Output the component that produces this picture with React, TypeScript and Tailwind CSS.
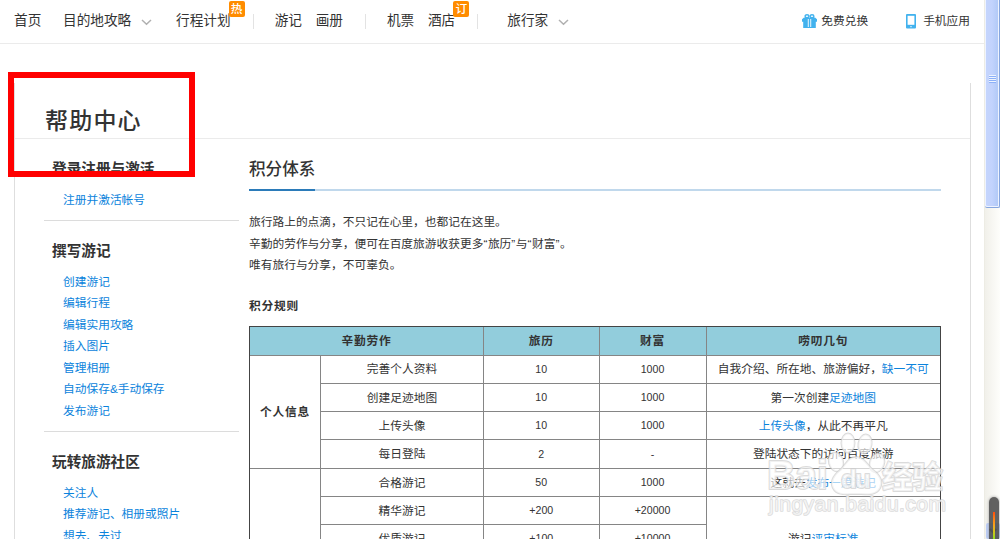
import type { ReactNode } from 'react';

const groups = [
  { title: '登录注册与激活', items: ['注册并激活帐号'] },
  {
    title: '撰写游记',
    items: ['创建游记', '编辑行程', '编辑实用攻略', '插入图片', '管理相册', '自动保存&手动保存', '发布游记'],
  },
  { title: '玩转旅游社区', items: ['关注人', '推荐游记、相册或照片', '想去、去过'] },
];

function Chevron() {
  return (
    <svg className="ml-[10px] mt-[2px] shrink-0" width="11" height="7" viewBox="0 0 11 7" fill="none" stroke="#b0b0b0" strokeWidth="1.5">
      <path d="M1 1l4.5 4.3L10 1" />
    </svg>
  );
}

function Badge({ children }: { children: ReactNode }) {
  return (
    <span className="absolute -right-[14px] -top-[10px] flex h-4 w-4 items-center justify-center rounded-[2px] bg-[#ff8c00] text-[11.7px] font-medium leading-none text-white">
      {children}
    </span>
  );
}

function GiftIcon() {
  return (
    <svg width="15" height="14" viewBox="0 0 15 14">
      <g fill="none" stroke="#42b2ee" strokeWidth="1.4">
        <ellipse cx="5" cy="2.2" rx="1.9" ry="1.5" />
        <ellipse cx="10" cy="2.2" rx="1.9" ry="1.5" />
      </g>
      <path fill="#42b2ee" d="M2 3.6h11l2 1.6v2.6h-1.2V14H1.2V7.8H0V5.2z" />
      <path fill="#fff" d="M5.8 5h.9v8h-.9zM8.3 5h.9v8h-.9z" />
    </svg>
  );
}

function PhoneIcon() {
  return (
    <svg width="10" height="15" viewBox="0 0 10 15">
      <rect width="10" height="14.5" rx="1" fill="#42b2ee" />
      <rect x="1.6" y="1.8" width="6.8" height="9" fill="#fff" />
      <rect x="4.3" y="12.2" width="1.4" height="1" fill="#fff" />
    </svg>
  );
}

function Q({ children }: { children: ReactNode }) {
  return <span className="tracking-[0.6px]">{children}</span>;
}

function Link({ children }: { children: ReactNode }) {
  return <a className="text-[#0b83dc]">{children}</a>;
}

function Cell({ children, className = '' }: { children?: ReactNode; className?: string }) {
  return (
    <div className={`flex items-center justify-center whitespace-nowrap border-b border-r border-[#858585] ${className}`}>
      <span>{children}</span>
    </div>
  );
}

function Head({ children, className = '' }: { children: ReactNode; className?: string }) {
  return <Cell className={`bg-[#92cddc] font-bold tracking-[0.8px] ${className}`}>{children}</Cell>;
}

function Num({ children }: { children: ReactNode }) {
  return <Cell className="pt-px text-[10.6px]">{children}</Cell>;
}

function Row({ name, exp, coin }: { name: string; exp: string; coin: string }) {
  return (
    <>
      <Cell>{name}</Cell>
      <Num>{exp}</Num>
      <Num>{coin}</Num>
    </>
  );
}

function Nav() {
  return (
    <nav className="flex h-[44px] items-center border-b border-[#ebebeb] pb-px pl-[14px] text-[13.67px] leading-5">
      <span className="w-[49px]">首页</span>
      <span className="flex w-[113px] items-center">目的地攻略<Chevron /></span>
      <span className="relative">行程计划<Badge>热</Badge></span>
      <span className="ml-[22px] mr-[21px] h-[15px] w-px bg-[#e3e3e3]" />
      <span className="w-[41px]">游记</span>
      <span>画册</span>
      <span className="ml-[22px] mr-[21px] h-[15px] w-px bg-[#e3e3e3]" />
      <span className="w-[41px]">机票</span>
      <span className="relative">酒店<Badge>订</Badge></span>
      <span className="ml-[22px] mr-[29px] h-[15px] w-px bg-[#e3e3e3]" />
      <span className="flex items-center">旅行家<Chevron /></span>
      <span className="ml-auto mr-[38px] flex items-center gap-[4px] text-[11.72px]"><GiftIcon />免费兑换</span>
      <span className="mr-[14px] flex items-center gap-[7px] text-[11.72px]"><PhoneIcon />手机应用</span>
    </nav>
  );
}

function Sidebar() {
  return (
    <aside className="w-[195px]">
      {groups.map((g) => (
        <section key={g.title} className="border-b border-[#dcdcdc] pb-[9.25px] pt-[20px]">
          <h3 className="pl-2 text-[14.65px] font-bold leading-[21px]">{g.title}</h3>
          <ul className="mt-[9px] pl-[19px]">
            {g.items.map((item) => (
              <li key={item} className="h-[21.5px] leading-[21.5px]"><Link>{item}</Link></li>
            ))}
          </ul>
        </section>
      ))}
    </aside>
  );
}

function PointsTable() {
  return (
    <div className="grid w-[692px] auto-rows-[28.3px] grid-cols-[71px_163px_115.5px_107px_1fr] grid-rows-[29px] border-l border-r border-t border-[#444]">
      <Head className="col-span-2">辛勤劳作</Head>
      <Head>旅历</Head>
      <Head>财富</Head>
      <Head className="border-r-0">唠叨几句</Head>

      <Cell className="row-span-4 font-bold tracking-[0.8px]">个人信息</Cell>
      <Row name="完善个人资料" exp="10" coin="1000" />
      <Cell className="border-r-0">自我介绍、所在地、旅游偏好，<Link>缺一不可</Link></Cell>
      <Row name="创建足迹地图" exp="10" coin="1000" />
      <Cell className="border-r-0">第一次创建<Link>足迹地图</Link></Cell>
      <Row name="上传头像" exp="10" coin="1000" />
      <Cell className="border-r-0"><Link>上传头像</Link>，从此不再平凡</Cell>
      <Row name="每日登陆" exp="2" coin="-" />
      <Cell className="border-r-0">登陆状态下的访问百度旅游</Cell>

      <Cell className="row-span-4" />
      <Row name="合格游记" exp="50" coin="1000" />
      <Cell className="border-r-0">这就去<Link>发布一篇游记</Link></Cell>
      <Row name="精华游记" exp="+200" coin="+20000" />
      <Cell className="row-span-3 border-r-0">游记<Link>评审标准</Link></Cell>
      <Row name="优质游记" exp="+100" coin="+10000" />
    </div>
  );
}

function Scrollbar() {
  return (
    <div className="relative h-full w-4 shrink-0 border-l border-[#edece4] bg-linear-to-r from-[#f1f0ea] to-[#fefefb]">
      <div className="flex h-[208px] flex-col items-center rounded-b-[2px] border-b border-r border-[#86a6df] bg-linear-to-r from-[#c5d5fd] via-[#c2d3fd] to-[#afc8f6] pt-[75px] shadow-[inset_1px_-1px_0_#eef3ff,inset_-1px_0_0_#eef3ff]">
        <div className="flex w-[7px] flex-col gap-px">
          {[0, 1, 2, 3].map((i) => (
            <span key={i} className="h-px bg-[#eef4fe] shadow-[0_1px_0_#8cb0f8]" />
          ))}
        </div>
      </div>
      <div className="absolute bottom-0 left-px flex h-4 w-[14px] items-center justify-center rounded-[2px] bg-[#bdcff8]">
        <svg width="8" height="6" viewBox="0 0 8 6" fill="none" stroke="#3d526e" strokeWidth="2"><path d="M.7 1L4 4.3 7.3 1" /></svg>
      </div>
      <div className="absolute bottom-0 right-px h-[42px] w-[10px] rounded-t-[5px] bg-[#505050]/90 shadow-[0_0_3px_#999]">
        <div className="absolute bottom-0 left-[4px] h-[27px] w-[2px] bg-linear-to-b from-[#ff4b0c] via-[#f7a51c] to-[#8fe01c]" />
      </div>
    </div>
  );
}

function Watermark() {
  return (
    <svg className="absolute left-[760px] top-[428px]" width="195" height="95" viewBox="0 0 195 95">
      <g
        fill="#fff"
        fillOpacity="0.65"
        stroke="#cccccc"
        strokeOpacity="0.7"
        strokeWidth="2"
        strokeLinejoin="round"
        fontFamily="'Liberation Sans', 'Noto Sans CJK SC', sans-serif"
        style={{ paintOrder: 'stroke' }}
      >
        <text x="7" y="61" fontSize="41" fontWeight="bold" textLength="61" lengthAdjust="spacingAndGlyphs">Bai</text>
        <ellipse cx="76" cy="34" rx="7" ry="9.5" transform="rotate(-15 76 34)" />
        <ellipse cx="88" cy="15" rx="6.5" ry="9.5" />
        <ellipse cx="105" cy="16" rx="6.5" ry="9.5" transform="rotate(10 105 16)" />
        <ellipse cx="117" cy="35" rx="7" ry="9.5" transform="rotate(20 117 35)" />
        <path d="M96 29c8 0 11 8 17 13 8 6 10 12 7 18-4 8-14 6-24 6s-19 2-23-6c-3-6 0-12 7-18 6-5 8-13 16-13z" />
        <text x="81" y="60" fontSize="26" fontWeight="bold" textLength="30">du</text>
        <text x="122" y="60" fontSize="31" fontWeight="bold" textLength="61">经验</text>
        <text x="9" y="83" fontSize="21" textLength="177" strokeWidth="1.6">jingyan.baidu.com</text>
      </g>
    </svg>
  );
}

export default function App() {
  return (
    <div className="relative flex h-[539px] w-[1000px] overflow-hidden bg-white font-['Liberation_Sans','Noto_Sans_CJK_SC',sans-serif] text-[11.72px] text-[#333]">
      <div className="min-w-0 flex-1">
        <Nav />
        <div className="ml-[14px] mt-[39px] w-[957px] border-x border-[#dedede]">
          <header className="flex h-[56px] items-center border-b border-[#ebebeb] pl-[30px] pt-[22px]">
            <h1 className="text-[23px] font-medium leading-none tracking-[1.2px]">帮助中心</h1>
          </header>
          <div className="flex gap-[10px] pl-[29px]">
            <Sidebar />
            <main className="w-[692px]">
              <div className="flex h-[52px] border-b-2 border-[#c0d8ec]">
                <h2 className="h-[52px] border-b-2 border-[#2b7bb9] pt-[20px] text-[16.6px] font-medium leading-[21px]">积分体系</h2>
              </div>
              <div className="mt-[20px] leading-[21.5px]">
                <p>旅行路上的点滴，不只记在心里，也都记在这里。</p>
                <p>辛勤的劳作与分享，便可在百度旅游收获更多<Q>“</Q>旅历<Q>”</Q>与<Q>“</Q>财富<Q>”</Q>。</p>
                <p>唯有旅行与分享，不可辜负。</p>
              </div>
              <h4 className="mb-[10px] mt-[19px] font-bold leading-[21px] tracking-[0.8px]">积分规则</h4>
              <PointsTable />
            </main>
          </div>
        </div>
      </div>
      <Scrollbar />
      <Watermark />
      <div className="absolute left-[8px] top-[72px] h-[105px] w-[187px] border-[6px] border-[#ff0000]" />
    </div>
  );
}
